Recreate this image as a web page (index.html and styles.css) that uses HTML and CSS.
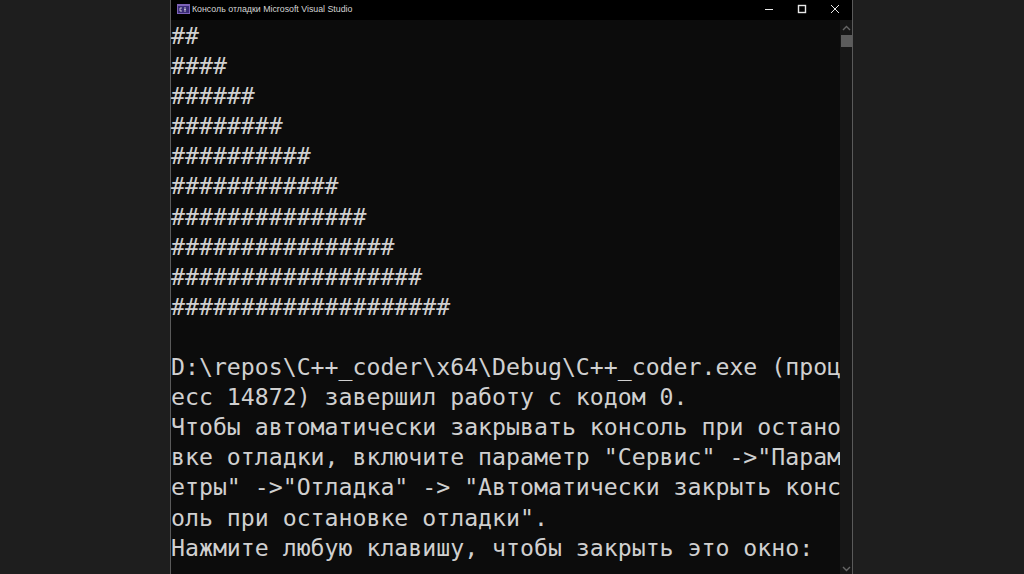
FILE: index.html
```html
<!DOCTYPE html>
<html lang="ru">
<head>
<meta charset="utf-8">
<title>Консоль отладки Microsoft Visual Studio</title>
<link rel="stylesheet" href="styles.css">
</head>
<body>
<div class="window">
  <header class="titlebar">
    <svg class="app-icon" width="13" height="10" viewBox="0 0 13 10"><rect width="13" height="10" fill="#7d62b8"/><rect x="1" y="2" width="11" height="7" fill="#3a2c78"/><path d="M5 4H3V7H5M7 4H9M7 5.5H9M7 7H9" stroke="#ddd" stroke-width="0.8" fill="none"/></svg>
    <span class="title">Консоль отладки Microsoft Visual Studio</span>
    <div class="controls">
      <svg width="10" height="10" viewBox="0 0 10 10"><path d="M1 5.5H9" stroke="#e8e8e8" fill="none"/></svg>
      <svg width="10" height="10" viewBox="0 0 10 10"><rect x="1.5" y="1.5" width="7" height="7" stroke="#e8e8e8" stroke-width="1.4" fill="none"/></svg>
      <svg width="10" height="10" viewBox="0 0 10 10"><path d="M1 1L9 9M9 1L1 9" stroke="#e8e8e8" fill="none"/></svg>
    </div>
  </header>
  <div class="body">
    <pre class="console">##
####
######
########
##########
############
##############
################
##################
####################

D:\repos\C++_coder\x64\Debug\C++_coder.exe (проц
есс 14872) завершил работу с кодом 0.
Чтобы автоматически закрывать консоль при остано
вке отладки, включите параметр "Сервис" -&gt;"Парам
етры" -&gt;"Отладка" -&gt; "Автоматически закрыть конс
оль при остановке отладки".
Нажмите любую клавишу, чтобы закрыть это окно:</pre>
    <div class="scrollbar">
      <svg class="arrow" width="9" height="6" viewBox="0 0 9 6"><path d="M1 5L4.5 1.5L8 5" stroke="#666" stroke-width="1.4" fill="none"/></svg>
      <div class="thumb"></div>
      <svg class="arrow-down" width="9" height="6" viewBox="0 0 9 6"><path d="M1 1L4.5 4.5L8 1" stroke="#666" stroke-width="1.4" fill="none"/></svg>
    </div>
  </div>
</div>
</body>
</html>
```
FILE: styles.css
```css
html, body { margin: 0; height: 100%; background: #1e1e1e; overflow: hidden; }
body { display: flex; padding-left: 170px; }
.window {
  width: 681px;
  height: 574px;
  background: #0c0c0c;
  border-left: 1px solid #5a5a5a;
  border-right: 1px solid #5a5a5a;
  display: flex;
  flex-direction: column;
  flex: none;
}
.titlebar {
  height: 20px;
  background: #000;
  display: flex;
  align-items: center;
  padding: 0 0 2px 6px;
  box-sizing: border-box;
  gap: 2px;
  flex: none;
}
.title { font: 8.8px "Liberation Sans", sans-serif; color: #d4d4d4; }
.controls { margin-left: auto; display: flex; gap: 23px; padding-right: 12px; }
.body { flex: 1; display: flex; min-height: 0; }
.console {
  flex: none;
  width: 671px;
  margin: 0;
  padding: 1px 0 0 0;
  font: 23.2px/30.1px "DejaVu Sans Mono", monospace;
  color: #d0d0d0;
}
.scrollbar {
  width: 12px;
  flex: none;
  margin-left: -2px;
  background: #171717;
  display: flex;
  flex-direction: column;
  align-items: flex-end;
}
.arrow { margin: 5px 1px 0 0; }
.thumb { width: 11px; height: 12px; background: #5c5c5c; margin-top: 4px; }
.arrow-down { margin: auto 1px 2px 0; }
```
